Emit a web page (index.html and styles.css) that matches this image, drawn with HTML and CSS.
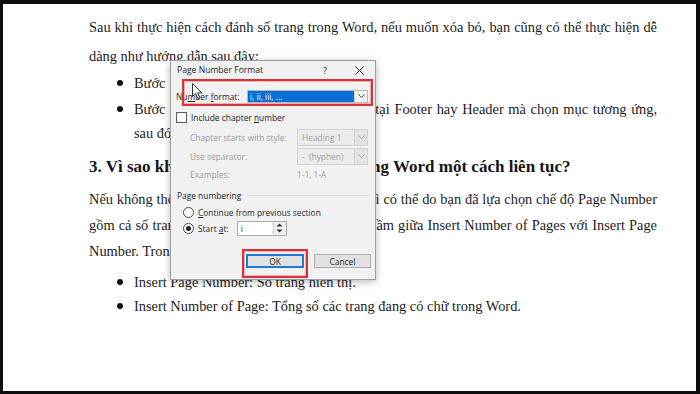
FILE: index.html
```html
<!DOCTYPE html>
<html lang="vi">
<head>
<meta charset="utf-8">
<title>Page Number Format</title>
<link rel="stylesheet" href="styles.css">
</head>
<body>
<div class="screen">
  <article class="doc">
    <p class="para p1">Sau khi thực hiện cách đánh số trang trong Word, nếu muốn xóa bỏ, bạn cũng có thể thực hiện dễ dàng như hướng dẫn sau đây:</p>
    <ul class="list list-a">
      <li>Bước 1: Nhấp đúp chuột vào Header.</li>
      <li>Bước 2: Chọn Page Number &gt; Remove, tại Footer hay Header mà chọn mục tương ứng, sau đó nhấn Delete.</li>
    </ul>
    <h2 class="heading">3. Vì sao không đánh số trang được trong Word một cách liên tục?</h2>
    <p class="para p2">Nếu không thể đánh số trang liên tục được nữa thì có thể do bạn đã lựa chọn chế độ Page Number gồm cả số trang và tổng số trang, bạn cũng đã nhầm giữa Insert Number of Pages với Insert Page Number. Trong đó:</p>
    <ul class="list list-b">
      <li>Insert Page Number: Số trang hiển thị.</li>
      <li>Insert Number of Page: Tổng số các trang đang có chữ trong Word.</li>
    </ul>
  </article>

  <div class="dialog">
    <div class="dlg-title">
      <span class="dlg-name">Page Number Format</span>
      <span class="dlg-help">?</span>
      <svg class="dlg-close" width="9" height="9" viewBox="0 0 9 9"><path d="M0.5 0.5L8.5 8.5M8.5 0.5L0.5 8.5" stroke="#222" stroke-width="1"/></svg>
    </div>
    <div class="row row-format">
      <span class="lbl">Nu<u>m</u>ber <u>f</u>ormat:</span>
      <div class="select select-active">
        <span class="sel-value">i, ii, iii, ...</span>
        <span class="sel-arrow"><svg width="7" height="4" viewBox="0 0 7 4"><path d="M0.5 0.5L3.5 3.5L6.5 0.5" fill="none" stroke="#555" stroke-width="1"/></svg></span>
      </div>
    </div>
    <div class="row row-check">
      <span class="checkbox"></span>
      <span class="lbl">Include chapter <u>n</u>umber</span>
    </div>
    <div class="row row-sub row-chapter">
      <span class="lbl dis">Chapter starts with style:</span>
      <div class="select select-dis">
        <span class="sel-value">Heading 1</span>
        <span class="sel-arrow"><svg width="7" height="4" viewBox="0 0 7 4"><path d="M0.5 0.5L3.5 3.5L6.5 0.5" fill="none" stroke="#aaa" stroke-width="1"/></svg></span>
      </div>
    </div>
    <div class="row row-sub row-sep">
      <span class="lbl dis">Use separator:</span>
      <div class="select select-dis">
        <span class="sel-value">-&nbsp;&nbsp;(hyphen)</span>
        <span class="sel-arrow"><svg width="7" height="4" viewBox="0 0 7 4"><path d="M0.5 0.5L3.5 3.5L6.5 0.5" fill="none" stroke="#aaa" stroke-width="1"/></svg></span>
      </div>
    </div>
    <div class="row row-sub row-examples">
      <span class="lbl dis">Examples:</span>
      <span class="examples dis">1-1, 1-A</span>
    </div>
    <div class="row row-group">
      <span class="lbl">Page numbering</span>
      <span class="group-line"></span>
    </div>
    <div class="row row-radio row-radio1">
      <span class="radio"></span>
      <span class="lbl"><u>C</u>ontinue from previous section</span>
    </div>
    <div class="row row-radio row-radio2">
      <span class="radio radio-on"></span>
      <span class="lbl">Start <u>a</u>t:</span>
      <div class="spin">
        <span class="spin-value">i</span>
        <span class="spin-btns">
          <svg width="7" height="4" viewBox="0 0 7 4"><path d="M0.5 3.5L3.5 0.5L6.5 3.5Z" fill="#333"/></svg>
          <svg width="7" height="4" viewBox="0 0 7 4"><path d="M0.5 0.5L3.5 3.5L6.5 0.5Z" fill="#333"/></svg>
        </span>
      </div>
    </div>
    <div class="row row-buttons">
      <span class="btn btn-default">OK</span>
      <span class="btn">Cancel</span>
    </div>
  </div>

  <div class="mark mark-format"></div>
  <div class="mark mark-ok"></div>

  <svg class="cursor" width="11" height="17" viewBox="0 0 11 17">
    <path d="M0.5 0.5L0.5 13.5L3.6 10.6L5.8 15.6L7.8 14.7L5.7 9.9L9.9 9.9Z" fill="#fff" stroke="#333" stroke-width="1" stroke-linejoin="round"/>
  </svg>
</div>
</body>
</html>
```

FILE: styles.css
```css
html, body {
  margin: 0;
  padding: 0;
  background: #000;
}

.screen {
  position: relative;
  width: 700px;
  height: 394px;
  box-sizing: border-box;
  border-style: solid;
  border-color: #0e0e0e;
  border-width: 4px 4px 3px 3px;
  background: #fff;
  overflow: hidden;
}

.doc {
  padding: 9px 39px 0 86px;
  font-family: "Liberation Serif", "Times New Roman", serif;
  font-size: 14.4px;
  color: #1c1c1c;
}

.para {
  margin: 0;
  text-align: justify;
}

.p1 { line-height: 29px; }

.p2 {
  line-height: 26px;
  margin-top: 6px;
}

.list {
  list-style: none;
  margin: 0;
  padding: 0 0 0 28px;
}

.list li {
  display: flex;
  line-height: 24px;
  text-align: justify;
}

.list li::before {
  content: "";
  flex: none;
  width: 6px;
  height: 6px;
  border-radius: 50%;
  background: #111;
  margin: 9px 11px 0 0;
}

.list li + li { margin-top: 2px; }

.list-b { margin-top: 6px; }
.list-b li + li { margin-top: 0; }

.heading {
  margin: 9px 0 0;
  font-size: 17px;
  line-height: 26px;
  font-weight: bold;
  color: #151515;
}

/* dialog */
.dialog {
  position: absolute;
  left: 167px;
  top: 56px;
  width: 206px;
  height: 220px;
  box-sizing: border-box;
  background: #f1f1f1;
  border: 1px solid #9d9d9d;
  box-shadow: 0 2px 7px rgba(0, 0, 0, 0.28);
  font-family: "Open Sans", "Noto Sans", sans-serif;
  font-size: 8.4px;
  color: #262626;
  display: flex;
  flex-direction: column;
}

.dlg-title {
  height: 18px;
  display: flex;
  align-items: center;
  padding-left: 6px;
  font-size: 8.6px;
}

.dlg-name { flex: 1; }

.dlg-help {
  width: 12px;
  text-align: center;
  margin-right: 24px;
  font-size: 9px;
}

.dlg-close {
  margin-right: 11px;
}

.row {
  display: flex;
  align-items: center;
  padding-left: 5px;
  white-space: nowrap;
}

.row-sub { padding-left: 19px; }

.lbl u { text-decoration: underline; text-underline-offset: 1px; }

.dis { color: #9b9b9b; }

.row-format { height: 16px; margin-top: 9px; }
.row-format .lbl { width: 71px; }

.select {
  display: flex;
  height: 13px;
  box-sizing: border-box;
  border: 1px solid #b9b9b9;
  background: #fff;
}

.select-active { width: 121px; }

.select-active .sel-value {
  flex: 1;
  background: #0a6fd4;
  color: #fff;
  padding-left: 2px;
  line-height: 11px;
  margin: 0;
}

.sel-arrow {
  width: 12px;
  display: flex;
  align-items: center;
  justify-content: center;
  border-left: 1px solid #d5d5d5;
  background: #f3f3f3;
}

.select-dis {
  margin-left: auto;
  margin-right: 7px;
  width: 71px;
  height: 17px;
  background: #ebebeb;
  border-color: #d3d3d3;
  color: #a3a3a3;
}

.select-dis .sel-value {
  flex: 1;
  padding-left: 4px;
  line-height: 15px;
}

.select-dis .sel-arrow {
  background: #e3e3e3;
  border-left-color: #d3d3d3;
}

.row-check { height: 16px; margin-top: 5px; }

.checkbox {
  width: 9px;
  height: 9px;
  border: 1px solid #5a5a5a;
  background: #fff;
  margin-right: 4px;
}

.row-chapter { height: 18px; margin-top: 3px; }
.row-sep { height: 18px; margin-top: 1px; }
.row-examples { height: 16px; margin-top: 1px; }

.examples {
  margin-left: auto;
  margin-right: 5px;
  width: 73px;
}

.row-group { height: 16px; margin-top: 5px; padding-left: 6px; }

.group-line {
  flex: 1;
  height: 1px;
  background: #dcdcdc;
  margin: 0 5px 0 6px;
}

.row-radio { height: 16px; padding-left: 12px; }
.row-radio1 { margin-top: 1px; }

.radio {
  width: 9px;
  height: 9px;
  border: 1px solid #4d4d4d;
  border-radius: 50%;
  background: #fff;
  margin-right: 4px;
  display: flex;
  align-items: center;
  justify-content: center;
}

.radio-on::after {
  content: "";
  width: 5px;
  height: 5px;
  border-radius: 50%;
  background: #222;
}

.spin {
  display: flex;
  width: 50px;
  height: 15px;
  box-sizing: border-box;
  margin-left: 8px;
  border: 1px solid #adadad;
  background: #fff;
}

.spin-value {
  flex: 1;
  padding-left: 3px;
  line-height: 13px;
}

.spin-btns {
  width: 12px;
  display: flex;
  flex-direction: column;
  align-items: center;
  justify-content: space-around;
  border-left: 1px solid #cfcfcf;
  background: #f0f0f0;
}

.row-buttons {
  height: 14px;
  margin-top: 18px;
  padding-left: 75px;
  gap: 10px;
}

.btn {
  width: 57px;
  height: 14px;
  box-sizing: border-box;
  display: flex;
  align-items: center;
  justify-content: center;
  background: #e1e1e1;
  border: 1px solid #adadad;
}

.btn-default {
  width: 58px;
  border: 2px solid #1f7ad6;
}

/* annotation marks */
.mark {
  position: absolute;
  box-sizing: border-box;
  border: 2px solid #d6343d;
  box-shadow: inset 0 0 0 1px rgba(232, 120, 128, 0.55);
}

.mark-format {
  left: 179px;
  top: 75px;
  width: 191px;
  height: 27px;
}

.mark-ok {
  left: 239px;
  top: 245px;
  width: 66px;
  height: 29px;
}

.cursor {
  position: absolute;
  left: 189px;
  top: 79px;
}
```
